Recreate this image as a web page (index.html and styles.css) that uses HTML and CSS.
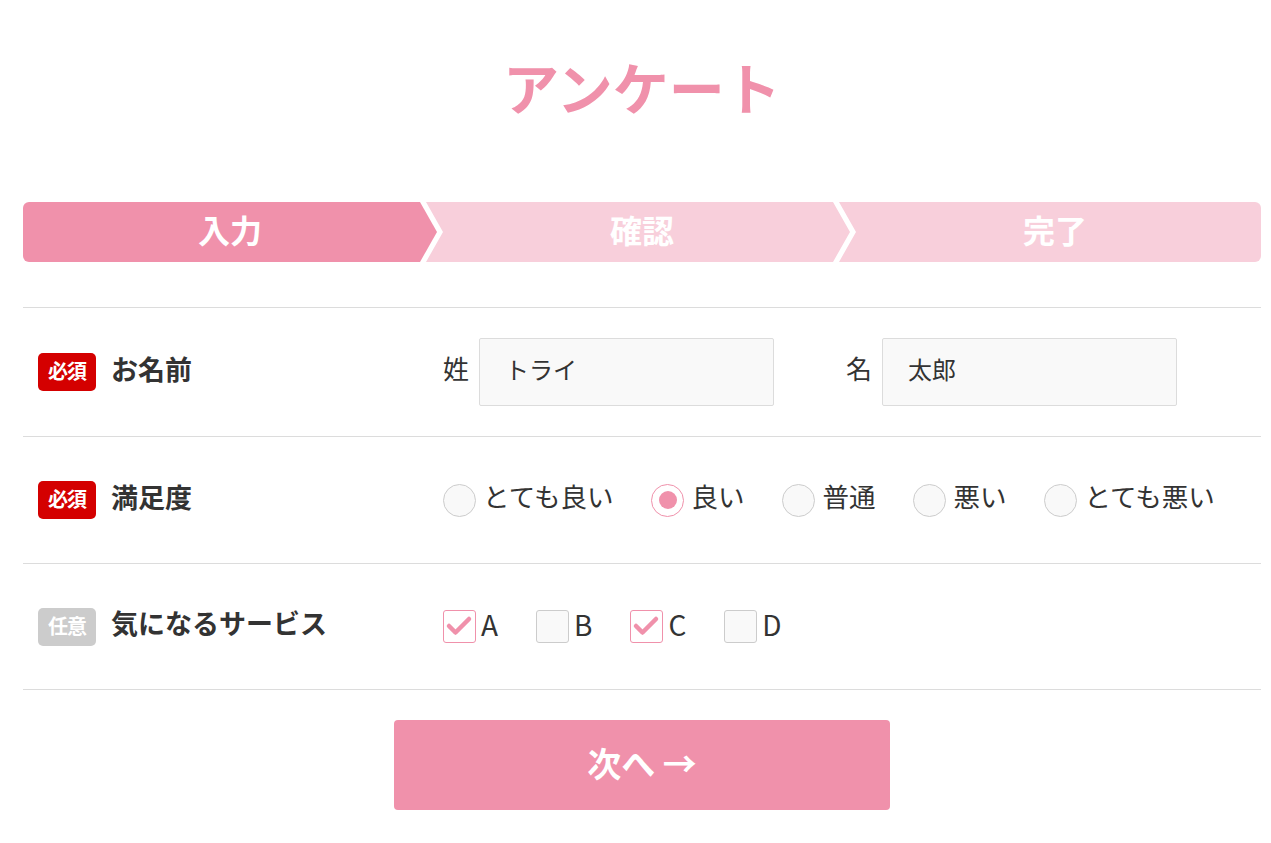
FILE: index.html
```html
<!DOCTYPE html>
<html lang="ja">
<head>
<meta charset="utf-8">
<title>アンケート</title>
<link rel="stylesheet" href="styles.css">
</head>
<body>
<main class="page">
  <h1 class="title">アンケート</h1>
  <ol class="steps">
    <li class="step step-first is-active"><span class="step-text">入力</span></li>
    <li class="step step-mid"><span class="step-text">確認</span></li>
    <li class="step step-last"><span class="step-text">完了</span></li>
  </ol>
  <form class="form">
    <div class="row">
      <div class="label-col"><span class="badge badge-req"><span class="badge-text">必須</span></span><span class="label">お名前</span></div>
      <div class="field-col">
        <label class="name-group"><span class="name-label">姓</span><span class="text-input"><span class="input-text">トライ</span></span></label>
        <label class="name-group"><span class="name-label">名</span><span class="text-input"><span class="input-text">太郎</span></span></label>
      </div>
    </div>
    <div class="row">
      <div class="label-col"><span class="badge badge-req"><span class="badge-text">必須</span></span><span class="label">満足度</span></div>
      <div class="field-col">
        <label class="choice"><span class="radio"></span><span class="choice-text">とても良い</span></label>
        <label class="choice"><span class="radio is-checked"></span><span class="choice-text">良い</span></label>
        <label class="choice"><span class="radio"></span><span class="choice-text">普通</span></label>
        <label class="choice"><span class="radio"></span><span class="choice-text">悪い</span></label>
        <label class="choice"><span class="radio"></span><span class="choice-text">とても悪い</span></label>
      </div>
    </div>
    <div class="row row-last">
      <div class="label-col"><span class="badge badge-opt"><span class="badge-text">任意</span></span><span class="label">気になるサービス</span></div>
      <div class="field-col">
        <label class="choice choice-check"><span class="checkbox is-checked"><svg viewBox="0 0 32 32" width="32" height="32"><path d="M6 16 L12.5 22.5 L26 9" fill="none" stroke="#f091ab" stroke-width="4.5" stroke-linecap="round" stroke-linejoin="round"/></svg></span><span class="choice-text letter">A</span></label>
        <label class="choice choice-check"><span class="checkbox"></span><span class="choice-text letter">B</span></label>
        <label class="choice choice-check"><span class="checkbox is-checked"><svg viewBox="0 0 32 32" width="32" height="32"><path d="M6 16 L12.5 22.5 L26 9" fill="none" stroke="#f091ab" stroke-width="4.5" stroke-linecap="round" stroke-linejoin="round"/></svg></span><span class="choice-text letter">C</span></label>
        <label class="choice choice-check"><span class="checkbox"></span><span class="choice-text letter">D</span></label>
      </div>
    </div>
    <div class="actions">
      <button type="button" class="next-btn"><span class="btn-text">次へ →</span></button>
    </div>
  </form>
</main>
</body>
</html>
```

FILE: styles.css
```css
* { box-sizing: border-box; }

body {
  margin: 0;
  background: #fff;
  color: #333;
  font-family: "Noto Sans CJK JP", "Noto Sans", sans-serif;
}

.page {
  margin: 0 10px 0 23px;
  padding-top: 46px;
}

.title {
  margin: 0;
  text-align: center;
  font-size: 56px;
  line-height: 80px;
  font-weight: 700;
  color: #f091ab;
}

.steps {
  list-style: none;
  margin: 76px 0 0;
  padding: 0;
  display: flex;
  height: 60px;
}

.step {
  display: flex;
  align-items: center;
  justify-content: center;
  color: #fff;
  font-size: 32px;
  font-weight: 700;
  background: #f8cfdb;
  min-width: 0;
}

.step-text {
  line-height: 1;
  padding-bottom: 6px;
}

.step.is-active { background: #f091ab; }

.step-first {
  flex: 414 1 0;
  border-radius: 6px 0 0 6px;
  clip-path: polygon(0 0, calc(100% - 17px) 0, 100% 50%, calc(100% - 17px) 100%, 0 100%);
}

.step-mid {
  flex: 424 1 0;
  margin-left: -11px;
  clip-path: polygon(0 0, calc(100% - 17px) 0, 100% 50%, calc(100% - 17px) 100%, 0 100%, 17px 50%);
}

.step-mid .step-text { margin-left: 8px; }

.step-last {
  flex: 422 1 0;
  margin-left: -11px;
  border-radius: 0 6px 6px 0;
  clip-path: polygon(0 0, 100% 0, 100% 100%, 0 100%, 17px 50%);
}

.step-last .step-text { margin-left: 10px; }

.form {
  margin-top: 45px;
}

.row {
  display: flex;
  align-items: center;
  min-height: 127px;
  padding: 30px 0;
  border-top: 1px solid #dcdcdc;
}

.row-last {
  border-bottom: 1px solid #dcdcdc;
}

.label-col {
  flex: 0 0 420px;
  display: flex;
  align-items: center;
  gap: 15px;
  padding-left: 15px;
}

.badge {
  display: inline-flex;
  align-items: center;
  justify-content: center;
  width: 58px;
  height: 38px;
  border-radius: 5px;
  color: #fff;
  font-size: 20px;
  font-weight: 700;
  letter-spacing: -1px;
}

.badge-text {
  line-height: 1;
  padding-bottom: 2px;
}

.badge-req { background: #d40000; }
.badge-opt { background: #cccccc; }

.label {
  font-size: 27px;
  font-weight: 700;
  line-height: 1;
  padding-bottom: 8px;
  color: #333;
}

.field-col {
  display: flex;
  align-items: center;
}

.name-group {
  display: flex;
  align-items: center;
  gap: 10px;
  margin-right: 72px;
}

.name-label {
  font-size: 26px;
  line-height: 1;
  padding-bottom: 8px;
  color: #333;
}

.text-input {
  display: flex;
  align-items: center;
  width: 295px;
  height: 68px;
  padding-left: 25px;
  background: #f9f9f9;
  border: 1px solid #dcdcdc;
  border-radius: 2px;
  font-size: 24px;
  color: #333;
}

.input-text {
  line-height: 1;
  padding-bottom: 6px;
}

.choice {
  display: flex;
  align-items: center;
  gap: 7px;
  margin-right: 38px;
  font-size: 26.5px;
  color: #333;
}

.choice-text {
  line-height: 1;
  padding-bottom: 7px;
}

.choice-check {
  gap: 5px;
  margin-right: 38px;
}

.letter {
  font-size: 28px;
  padding-bottom: 6px;
}

.radio {
  position: relative;
  width: 33px;
  height: 33px;
  border-radius: 50%;
  background: #f9f9f9;
  border: 1px solid #cccccc;
}

.radio.is-checked {
  background: #fff;
  border-color: #f091ab;
}

.radio.is-checked::after {
  content: "";
  position: absolute;
  left: 50%;
  top: 50%;
  width: 18px;
  height: 18px;
  margin: -9px 0 0 -9px;
  border-radius: 50%;
  background: #f091ab;
}

.checkbox {
  display: block;
  width: 33px;
  height: 33px;
  border-radius: 3px;
  background: #f9f9f9;
  border: 1px solid #cccccc;
}

.checkbox svg {
  display: block;
  margin: -1px;
}

.checkbox.is-checked {
  background: #fff;
  border-color: #f091ab;
}

.actions {
  display: flex;
  justify-content: center;
  padding-top: 30px;
}

.next-btn {
  display: flex;
  align-items: center;
  justify-content: center;
  width: 496px;
  height: 90px;
  border: none;
  border-radius: 4px;
  background: #f091ab;
  color: #fff;
  font-family: inherit;
  font-size: 34px;
  font-weight: 700;
  cursor: pointer;
}

.btn-text {
  line-height: 1;
  padding-bottom: 4px;
}
```
